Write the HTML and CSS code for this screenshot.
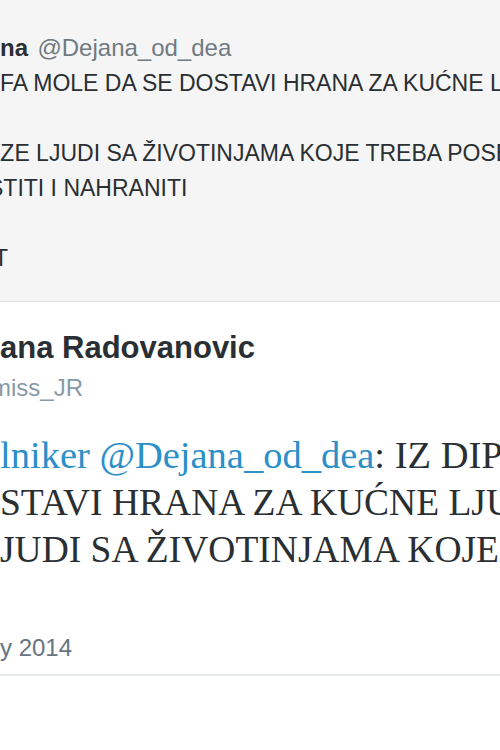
FILE: index.html
```html
<!DOCTYPE html>
<html lang="sr">
<head>
<meta charset="utf-8">
<title>Tweet</title>
<link rel="stylesheet" href="styles.css">
</head>
<body>
<div class="page">
  <section class="quoted">
    <div class="line"><span class="q-name">na</span> <span class="q-handle">@Dejana_od_dea</span></div>
    <div class="line">FA MOLE DA SE DOSTAVI HRANA ZA KUĆNE LJUBIMCE</div>
    <div class="line blank">&nbsp;</div>
    <div class="line cut-a">AZE LJUDI SA ŽIVOTINJAMA KOJE TREBA POSETITI</div>
    <div class="line cut-s">ŠTITI I NAHRANITI</div>
    <div class="line blank">&nbsp;</div>
    <div class="line cut-t">T</div>
  </section>
  <section class="tweet">
    <div class="t-name">ana Radovanovic</div>
    <div class="t-handle">miss_JR</div>
    <div class="t-text">
      <div class="t-line"><span class="link">lniker</span> <span class="link">@Dejana_od_dea</span>: IZ DIPLOMATSKOG</div>
      <div class="t-line caps">STAVI HRANA ZA KUĆNE LJUBIMCE</div>
      <div class="t-line caps">JUDI SA ŽIVOTINJAMA KOJE TREBA</div>
    </div>
    <div class="t-date">y 2014</div>
  </section>
</div>
</body>
</html>
```
FILE: styles.css
```css
html, body {
  margin: 0;
  padding: 0;
  background: #ffffff;
}

.page {
  width: 500px;
  height: 750px;
  overflow: hidden;
  font-family: "Liberation Sans", Arial, sans-serif;
  color: #292f33;
}

.quoted {
  background: #f5f5f5;
  padding: 30px 0 25px 0;
  border-bottom: 1px solid #e1e4e6;
  font-size: 23px;
  line-height: 35px;
  color: #292f33;
}

.line {
  white-space: nowrap;
}

.q-name {
  font-weight: bold;
  font-size: 24px;
  color: #292f33;
}

.q-handle {
  font-size: 24px;
  color: #707a80;
  margin-left: 3px;
}

.cut-a {
  margin-left: -15px;
}

.cut-s {
  margin-left: -12px;
}

.cut-t {
  margin-left: -6px;
}

.tweet {
  background: #ffffff;
  padding: 28px 0 11px 0;
  border-bottom: 2px solid #e8ebed;
  white-space: nowrap;
}

.t-name {
  font-size: 31px;
  line-height: 36px;
  font-weight: bold;
  color: #292f33;
}

.t-handle {
  font-size: 24px;
  line-height: 30px;
  margin-top: 7px;
  margin-left: -9px;
  color: #8899a6;
}

.t-text {
  margin-top: 29px;
  font-family: "Liberation Serif", "Times New Roman", serif;
  font-size: 38.5px;
  line-height: 47px;
  color: #292f33;
}

.t-line.caps {
  font-size: 37.5px;
}

.link {
  color: #2b8fc9;
}

.t-date {
  margin-top: 60px;
  font-size: 24px;
  line-height: 30px;
  color: #66757f;
}
```
